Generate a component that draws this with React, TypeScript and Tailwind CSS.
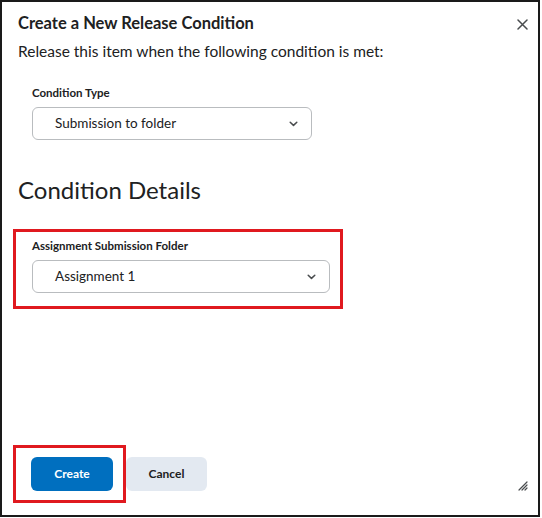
import React from 'react';

const Chevron = () => (
  <svg width="9" height="6" viewBox="0 0 9 6" fill="none" stroke="#494c4e" strokeWidth="1.5" strokeLinecap="round" strokeLinejoin="round">
    <path d="M1.2 1.2 4.5 4.4 7.8 1.2" />
  </svg>
);

const Select = ({ value, width }: { value: string; width: string }) => (
  <div className={`flex items-center justify-between h-[33px] rounded-md border border-[#b9bcbf] bg-white pl-[22px] pr-[13px] ${width}`}>
    <span className="text-[13.5px] text-[#202122]">{value}</span>
    <Chevron />
  </div>
);

const App = () => {
  return (
    <div className="w-[542px] h-[518px] bg-white font-['Lato',sans-serif] text-[#202122]">
      <div className="w-[540px] h-[517px] border-2 border-[#1a1a1a] flex flex-col">
        <div className="flex items-start justify-between pl-[16px] pr-[10px] pt-[10px]">
          <h1 className="text-[16.5px] font-bold leading-[22px]">Create a New Release Condition</h1>
          <svg className="mt-[7px]" width="11" height="11" viewBox="0 0 11 11" stroke="#494c4e" strokeWidth="1.5" strokeLinecap="round">
            <path d="M1 1 10 10M10 1 1 10" />
          </svg>
        </div>
        <p className="pl-[16px] mt-[7px] text-[15.5px] leading-[20px]">Release this item when the following condition is met:</p>

        <div className="pl-[30px] mt-[24px]">
          <div className="text-[11.5px] font-bold leading-[16px]">Condition Type</div>
          <div className="mt-[6px]">
            <Select value="Submission to folder" width="w-[280px]" />
          </div>
        </div>

        <h2 className="pl-[16px] mt-[35px] text-[24px] leading-[30px]">Condition Details</h2>

        <div className="ml-[11px] mt-[24px] w-[330px] h-[80px] border-[3px] border-[#e0191f] pl-[16px] pt-[6px]">
          <div className="text-[11.5px] font-bold leading-[16px]">Assignment Submission Folder</div>
          <div className="mt-[6px]">
            <Select value="Assignment 1" width="w-[298px]" />
          </div>
        </div>

        <div className="flex-1" />

        <div className="flex items-end justify-between pr-[10px] pb-[12px]">
          <div className="flex items-center">
            <div className="ml-[11px] w-[113px] h-[58px] border-[3px] border-[#e0191f] pl-[15px] flex items-center">
              <button className="w-[82px] h-[34px] rounded-md bg-[#006fbf] text-white text-[12px] font-bold">Create</button>
            </div>
            <button className="w-[81px] h-[34px] rounded-md bg-[#e3e9f1] text-[#202122] text-[12px] font-bold">Cancel</button>
          </div>
          <svg className="mb-[12px]" width="10" height="10" viewBox="0 0 10 10" stroke="#494c4e" strokeWidth="1.2" strokeLinecap="round">
            <path d="M1 9 9 1M4 9 9 4M7 9 9 7" />
          </svg>
        </div>
      </div>
    </div>
  );
};

export default App;
